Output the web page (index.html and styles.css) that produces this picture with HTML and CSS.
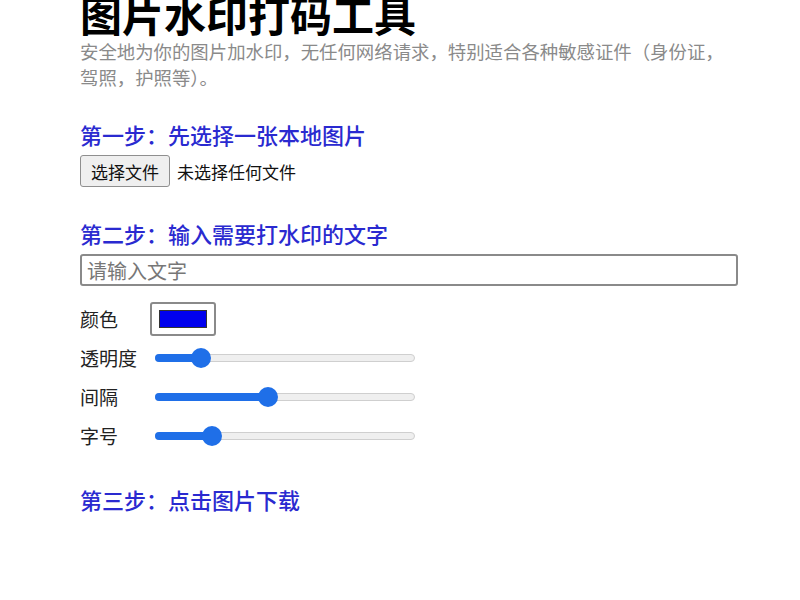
FILE: index.html
```html
<!DOCTYPE html>
<html lang="zh-CN">
<head>
<meta charset="utf-8">
<link rel="stylesheet" href="styles.css">
</head>
<body>
<main class="page">
  <h1 class="title">图片水印打码工具</h1>
  <p class="intro">安全地为你的图片加水印，无任何网络请求，特别适合各种敏感证件（身份证，驾照，护照等）。</p>

  <h2 class="step">第一步：先选择一张本地图片</h2>
  <div class="file-row">
    <span class="file-btn">选择文件</span>
    <span class="file-name">未选择任何文件</span>
  </div>

  <h2 class="step step-two">第二步：输入需要打水印的文字</h2>
  <input class="text-input" type="text" placeholder="请输入文字">

  <div class="controls">
    <div class="ctl">
      <span class="ctl-label">颜色</span>
      <span class="color-box"><span class="color-swatch"></span></span>
    </div>
    <div class="ctl">
      <span class="ctl-label">透明度</span>
      <span class="range"><span class="fill" style="width:45px"></span><span class="thumb" style="left:45px"></span></span>
    </div>
    <div class="ctl">
      <span class="ctl-label">间隔</span>
      <span class="range"><span class="fill" style="width:112px"></span><span class="thumb" style="left:112px"></span></span>
    </div>
    <div class="ctl">
      <span class="ctl-label">字号</span>
      <span class="range"><span class="fill" style="width:56px"></span><span class="thumb" style="left:56px"></span></span>
    </div>
  </div>

  <h2 class="step step-three">第三步：点击图片下载</h2>
</main>
</body>
</html>
```

FILE: styles.css
```css
html, body {
  margin: 0;
  padding: 0;
  background: #fff;
}
body {
  font-family: "Noto Sans CJK SC", "Noto Sans", sans-serif;
  color: #111;
}
.page {
  width: 660px;
  margin-left: 80px;
  display: flex;
  flex-direction: column;
  align-items: flex-start;
}
.title {
  margin: -16px 0 0 0;
  font-size: 42px;
  font-weight: 700;
  line-height: 60px;
  color: #000;
}
.intro {
  margin: -6px 0 0 0;
  font-size: 18.4px;
  line-height: 26px;
  color: #8a8a8a;
  width: 658px;
}
.step {
  margin: 28px 0 0 0;
  font-size: 22px;
  font-weight: 500;
  line-height: 32px;
  color: #2a2ad0;
}
.file-row {
  display: flex;
  align-items: center;
  gap: 7px;
  margin-top: 5px;
}
.file-btn {
  display: inline-flex;
  align-items: center;
  height: 30px;
  padding: 0 10px;
  border: 1px solid #8f8f8f;
  border-radius: 3px;
  background: #efefef;
  font-size: 17px;
  color: #111;
}
.file-name {
  font-size: 17px;
  color: #111;
}
.step-two {
  margin-top: 30px;
}
.text-input {
  box-sizing: border-box;
  width: 658px;
  height: 32px;
  margin: 5px 0 0 0;
  padding: 0 5px;
  border: 2px solid #8a8a8a;
  border-radius: 3px;
  font-family: inherit;
  font-size: 20px;
  color: #111;
}
.text-input::placeholder {
  color: #777;
}
.controls {
  display: flex;
  flex-direction: column;
  margin-top: 16px;
  gap: 6px;
}
.ctl {
  display: flex;
  align-items: center;
  height: 33px;
}
.ctl-label {
  width: 72px;
  font-size: 19px;
  color: #222;
}
.color-box {
  box-sizing: border-box;
  margin-left: -2px;
  width: 66px;
  height: 34px;
  border: 2px solid #8a8a8a;
  border-radius: 3px;
  padding: 6px 7px;
  display: flex;
}
.color-swatch {
  flex: 1;
  background: #0000ee;
  border: 1px solid #333;
}
.range {
  position: relative;
  margin-left: 3px;
  width: 260px;
  height: 8px;
  border-radius: 4px;
  background: #efefef;
  border: 1px solid #cfcfcf;
  box-sizing: border-box;
}
.fill {
  position: absolute;
  left: -1px;
  top: -1px;
  height: 8px;
  border-radius: 4px;
  background: #1f6fe8;
}
.thumb {
  position: absolute;
  top: -7px;
  width: 20px;
  height: 20px;
  margin-left: -10px;
  border-radius: 50%;
  background: #1f6fe8;
}
.step-three {
  margin-top: 31px;
}
```
